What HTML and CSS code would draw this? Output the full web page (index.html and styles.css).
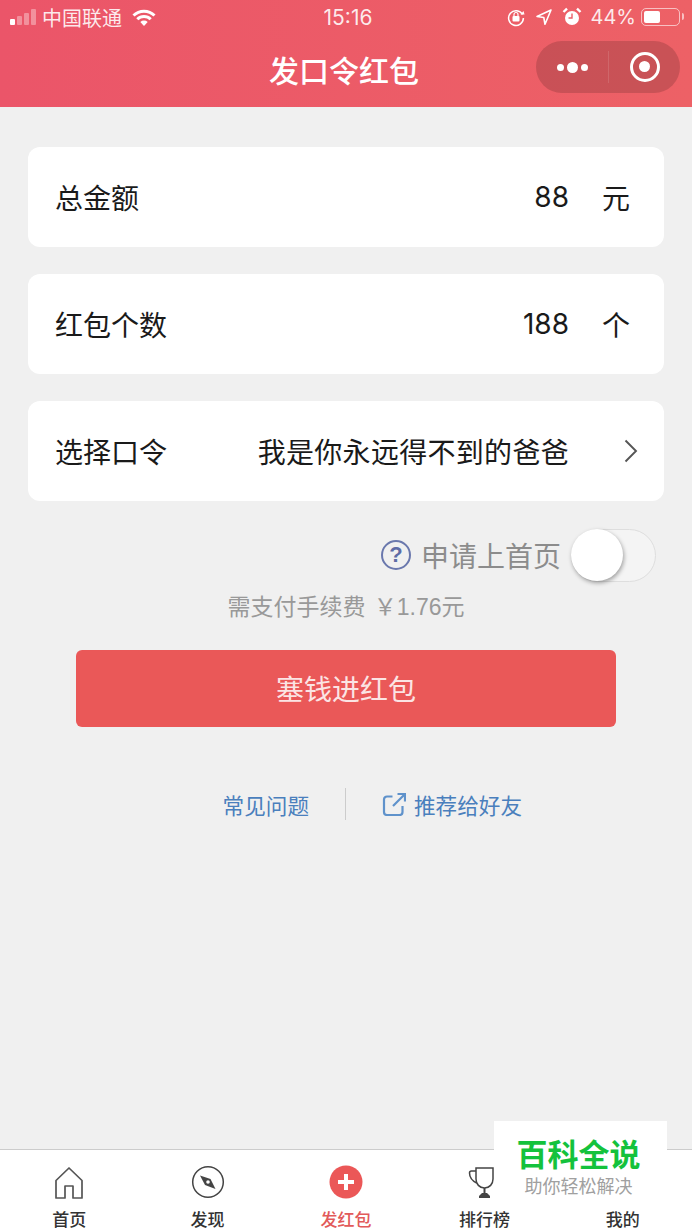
FILE: index.html
```html
<!DOCTYPE html>
<html lang="zh-CN">
<head>
  <meta charset="UTF-8">
  <title>发口令红包</title>
  <link rel="stylesheet" href="styles.css">
</head>
<body>

  <header class="top">
    <div class="status">
      <div class="status-left">
        <span class="signal"><i class="on"></i><i></i><i></i><i></i></span>
        <span>中国联通</span>
        <svg class="wifi" viewBox="0 0 24 17" width="24" height="17">
          <path d="M1.500 6.500a15 15 0 0 1 21 0M5.300 10.300a9.500 9.500 0 0 1 13.400 0" fill="none" stroke="#fff" stroke-width="3"/>
          <path d="M8.300 13a5.500 5.500 0 0 1 7.400 0L12 17z" fill="#fff"/>
        </svg>
      </div>
      <div class="status-time">15:16</div>
      <div class="status-right">
        <svg viewBox="0 0 20 20" width="20" height="20">
          <path d="M16.500 7.500A7.400 7.400 0 1 0 17.400 11" fill="none" stroke="#fff" stroke-width="1.500"/>
          <path d="M14.500 7.500h4l-1-3.500z" fill="#fff"/>
          <rect x="6.500" y="9" width="7" height="5.500" rx="1" fill="#fff"/>
          <path d="M8 9V7.500a2 2 0 0 1 4 0V9" fill="none" stroke="#fff" stroke-width="1.200"/>
        </svg>
        <svg viewBox="0 0 18 18" width="18" height="18">
          <path d="M16 2 2 8.500l6.800 1 1.200 6.800z" fill="none" stroke="#fff" stroke-width="1.600" stroke-linejoin="round"/>
        </svg>
        <svg viewBox="0 0 20 20" width="20" height="20">
          <circle cx="10" cy="11" r="7" fill="#fff"/>
          <path d="M10 6.500V11H6.500" fill="none" stroke="#ec5f68" stroke-width="1.400"/>
          <path d="M1.500 5 5 1.700M18.500 5 15 1.700" stroke="#fff" stroke-width="2.400"/>
        </svg>
        <span class="percent">44%</span>
        <span class="battery"><i></i></span>
      </div>
    </div>
    <div class="navbar">
      <h1>发口令红包</h1>
      <div class="capsule">
        <span class="dots"><i></i><i class="big"></i><i></i></span>
        <span class="capsule-line"></span>
        <span class="target"><i></i></span>
      </div>
    </div>
  </header>

  <main class="content">
    <div class="card">
      <span class="card-label">总金额</span>
      <span class="card-value">88</span>
      <span class="card-unit">元</span>
    </div>
    <div class="card">
      <span class="card-label">红包个数</span>
      <span class="card-value">188</span>
      <span class="card-unit">个</span>
    </div>
    <div class="card">
      <span class="card-label">选择口令</span>
      <span class="card-value card-value-text">我是你永远得不到的爸爸</span>
      <span class="card-unit card-arrow">
        <svg viewBox="0 0 16 26" width="16" height="26">
          <path d="M2.500 2.500 13 13 2.500 23.500" fill="none" stroke="#555" stroke-width="1.900"/>
        </svg>
      </span>
    </div>

    <div class="apply">
      <span class="help">?</span>
      <span class="apply-text">申请上首页</span>
      <span class="switch"><i></i></span>
    </div>
    <p class="fee">需支付手续费 ￥1.76元</p>

    <button class="submit">塞钱进红包</button>

    <div class="links">
      <a class="link link-left">常见问题</a>
      <a class="link link-right">
        <svg viewBox="0 0 24 24" width="24" height="24">
          <path d="M10.500 4.500H5A3 3 0 0 0 2 7.500V20a3 3 0 0 0 3 3h12.500a3 3 0 0 0 3-3v-6M11 14 22 3M15.500 2H23v7.500" fill="none" stroke="#5f92cb" stroke-width="2.200"/>
        </svg>
        推荐给好友
      </a>
    </div>
  </main>

  <nav class="tabs">
    <div class="tab">
      <svg viewBox="0 0 32 34" width="32" height="34">
        <path d="M3 15.500 16 3l13 12.500V33H20V21h-8v12H3z" fill="none" stroke="#555" stroke-width="1.700" stroke-linejoin="round"/>
      </svg>
      <span>首页</span>
    </div>
    <div class="tab">
      <svg viewBox="0 0 34 34" width="34" height="34">
        <circle cx="17" cy="17" r="15.300" fill="none" stroke="#444" stroke-width="1.500"/>
        <path d="M9 10.500 19.500 14 24.500 24 14 20z" fill="#444"/>
        <circle cx="17" cy="17" r="1.800" fill="#fff"/>
      </svg>
      <span>发现</span>
    </div>
    <div class="tab tab-active">
      <svg viewBox="0 0 34 34" width="34" height="34">
        <circle cx="17" cy="17" r="16.500" fill="#eb5757"/>
        <path d="M17 9v16M9 17h16" stroke="#fff" stroke-width="4"/>
      </svg>
      <span>发红包</span>
    </div>
    <div class="tab">
      <svg viewBox="0 0 34 34" width="34" height="34">
        <path d="M9 3h17v11c0 5-3.500 9-8.500 9S9 19 9 14zM9 6H4.500C3 6 2.500 7 2.500 8c0 4 2.500 8 8 10.500" fill="none" stroke="#444" stroke-width="1.500"/>
        <path d="M17.500 23v5" stroke="#444" stroke-width="2"/>
        <path d="M12 33v-2l3-3h5l3 3v2z" fill="#444"/>
      </svg>
      <span>排行榜</span>
    </div>
    <div class="tab">
      <span class="tab-blank"></span>
      <span>我的</span>
    </div>
  </nav>

  <div class="watermark">
    <div class="watermark-title">百科全说</div>
    <div class="watermark-sub">助你轻松解决</div>
  </div>

</body>
</html>
```

FILE: styles.css
```css
* {
  box-sizing: border-box;
}

body {
  font-family: "Liberation Sans", "Noto Sans CJK SC", sans-serif;
  background: #f0f0f0;
  color: #1a1a1a;
  margin: 0;
  width: 692px;
  height: 1230px;
  display: flex;
  flex-direction: column;
  position: relative;
  overflow: hidden;
}

.top {
  height: 107px;
  background: linear-gradient(90deg, #eb5569, #ed6166);
  color: #fff;
  flex-shrink: 0;
}

.status {
  height: 34px;
  padding: 0 12px 0 10px;
  display: grid;
  grid-template-columns: 1fr auto 1fr;
  align-items: center;
  font-size: 20px;
  color: rgba(255, 255, 255, 0.88);
}

.status-left,
.status-right {
  display: flex;
  align-items: center;
}

.status-left {
  gap: 6px;
}

.status-right {
  justify-content: flex-end;
  gap: 9px;
}

.status-time {
  font-family: "Inter", "Liberation Sans", sans-serif;
  font-size: 21px;
  padding-left: 6px;
}

.percent {
  font-family: "Inter", "Liberation Sans", sans-serif;
  font-size: 20px;
  margin-right: -1px;
}

.signal {
  display: flex;
  align-items: flex-end;
  gap: 2px;
  height: 16px;
}

.signal i {
  width: 5px;
  border-radius: 1px;
  background: rgba(255, 255, 255, 0.35);
}

.signal i:nth-child(1) { height: 6px; background: #fff; }
.signal i:nth-child(2) { height: 9px; }
.signal i:nth-child(3) { height: 12px; }
.signal i:nth-child(4) { height: 16px; }

.wifi {
  margin-left: 4px;
}

.battery {
  width: 39px;
  height: 18px;
  border: 1.500px solid rgba(255, 255, 255, 0.6);
  border-radius: 5px;
  padding: 2px;
  margin-left: -3px;
  position: relative;
}

.battery::after {
  content: "";
  position: absolute;
  right: -4.500px;
  top: 4px;
  width: 2px;
  height: 7px;
  background: rgba(255, 255, 255, 0.6);
  border-radius: 0 2px 2px 0;
}

.battery i {
  display: block;
  width: 16px;
  height: 100%;
  background: #fff;
  border-radius: 2px;
}

.navbar {
  height: 73px;
  display: flex;
  align-items: center;
  justify-content: center;
  position: relative;
  padding: 0 4px 4px 0;
}

.navbar h1 {
  margin: 0;
  font-size: 30px;
  font-weight: 500;
  color: #fff;
}

.capsule {
  position: absolute;
  right: 12px;
  top: 7px;
  width: 144px;
  height: 52px;
  border-radius: 26px;
  background: rgba(120, 50, 50, 0.3);
  display: flex;
  align-items: center;
}

.dots {
  width: 72px;
  display: flex;
  align-items: center;
  justify-content: center;
  gap: 3px;
}

.dots i {
  width: 7px;
  height: 7px;
  border-radius: 50%;
  background: #fff;
}

.dots i.big {
  width: 11px;
  height: 11px;
}

.capsule-line {
  width: 1px;
  height: 32px;
  background: rgba(255, 255, 255, 0.12);
}

.target {
  flex: 1;
  display: flex;
  justify-content: center;
}

.target i {
  width: 30px;
  height: 30px;
  border: 3.500px solid #fff;
  border-radius: 50%;
  position: relative;
}

.target i::after {
  content: "";
  position: absolute;
  left: 6px;
  top: 6px;
  width: 11px;
  height: 11px;
  background: #fff;
  border-radius: 50%;
}

.content {
  flex: 1;
  padding: 40px 28px 0;
}

.card {
  height: 100px;
  background: #fff;
  border-radius: 12px;
  margin-bottom: 27px;
  padding: 0 34px 0 27px;
  display: flex;
  align-items: center;
  font-size: 28px;
}

.card-label {
  flex: 1;
}

.card-value {
  font-family: "Inter", "Noto Sans CJK SC", sans-serif;
  font-size: 28px;
}

.card-value-text {
  letter-spacing: 0.3px;
}

.card-unit {
  width: 28px;
  margin-left: 33px;
  display: flex;
  justify-content: center;
}

.card-arrow {
  justify-content: flex-end;
}

.card-arrow svg {
  margin-right: -9px;
}

.apply {
  height: 54px;
  display: flex;
  align-items: center;
  justify-content: flex-end;
  padding-right: 8px;
}

.help {
  width: 30px;
  height: 30px;
  border: 2.500px solid #6a78ad;
  border-radius: 50%;
  color: #5d6ca6;
  font-size: 22px;
  font-weight: 700;
  display: flex;
  align-items: center;
  justify-content: center;
}

.apply-text {
  font-size: 28px;
  color: #8c8c8c;
  margin: 0 10px 0 10px;
}

.switch {
  width: 85px;
  height: 53px;
  border: 1.500px solid #dedede;
  border-radius: 27px;
  background: #f4f4f4;
  position: relative;
}

.switch i {
  position: absolute;
  left: -1px;
  top: -1px;
  width: 52px;
  height: 52px;
  border-radius: 50%;
  background: #fff;
  box-shadow: 1px 2px 4px rgba(0, 0, 0, 0.35);
}

.fee {
  margin: 7px 0 25px;
  height: 36px;
  line-height: 36px;
  text-align: center;
  font-size: 23px;
  color: #999;
  word-spacing: 2px;
}

.submit {
  display: block;
  width: 540px;
  height: 77px;
  margin: 0 auto;
  border: none;
  border-radius: 6px;
  background: #ea5858;
  color: #fbe4e4;
  font-family: inherit;
  font-size: 28px;
  padding-bottom: 2px;
}

.links {
  display: flex;
  justify-content: center;
  align-items: center;
  margin-top: 61px;
  height: 32px;
}

.link {
  color: #4a7fbd;
  font-size: 21.600px;
  display: flex;
  align-items: center;
}

.link-left {
  width: 290px;
  justify-content: flex-end;
  padding-right: 36px;
  border-right: 1px solid #ccc;
  height: 32px;
}

.link-right {
  width: 290px;
  padding-left: 36px;
  gap: 8px;
}

.tabs {
  height: 81px;
  flex-shrink: 0;
  background: #fff;
  border-top: 1.500px solid #ccc;
  display: grid;
  grid-template-columns: repeat(5, 1fr);
}

.tab {
  display: flex;
  flex-direction: column;
  align-items: center;
  padding-top: 15px;
  gap: 11px;
  font-size: 17px;
  line-height: 22px;
  font-weight: 500;
  color: #333;
}

.tab svg,
.tab-blank {
  height: 34px;
  display: block;
}

.tab-active {
  color: #e25a5a;
}

.watermark {
  position: absolute;
  left: 494px;
  top: 1121px;
  width: 173px;
  height: 85px;
  background: #fff;
  text-align: center;
  padding: 15px 4px 0 0;
}

.watermark-title {
  color: #14c23c;
  font-size: 31px;
  font-weight: 700;
  line-height: 40px;
}

.watermark-sub {
  color: #a0a0a0;
  font-size: 18px;
  line-height: 22px;
}
```
